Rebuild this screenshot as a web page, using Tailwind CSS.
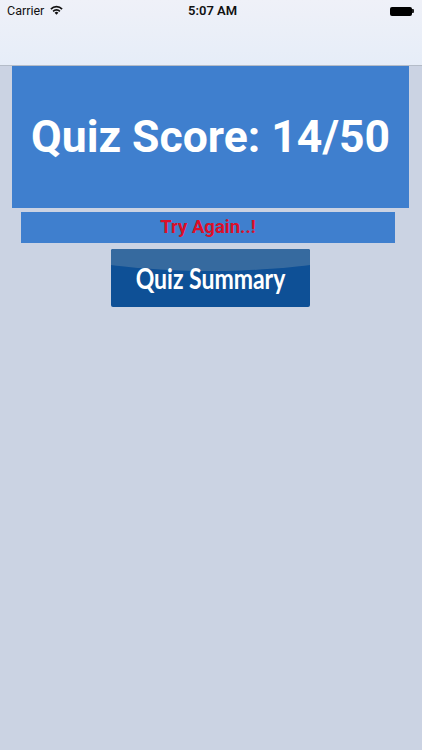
<!DOCTYPE html>
<html>

<head>
    <title>Quiz Score</title>
    <meta charset="UTF-8">
    <meta name="viewport" content="width=device-width, initial-scale=1.0">
    <script src="https://cdn.jsdelivr.net/npm/@tailwindcss/browser@4"></script>
</head>

<body class="bg-[#cbd3e3] font-['Roboto',Arial,sans-serif]">
    <div class="w-[422px] h-[750px] overflow-hidden flex flex-col items-center">
        <!-- status bar + empty nav bar -->
        <div class="w-full h-[66px] shrink-0 bg-gradient-to-b from-[#eff1f8] to-[#e6edf8] border-b border-[#b4bcc8]">
            <div class="relative h-[22px] flex items-center justify-between pl-[7px] pr-[8px] text-[#111]">
                <div class="flex items-center gap-[6px]">
                    <span class="text-[12.5px] leading-none">Carrier</span>
                    <svg class="w-[13px] h-[10px] -mt-[3px]" viewBox="0 0 13 10">
                        <path d="M0.3 3.4A8.6 8.6 0 0 1 12.7 3.4L11.5 4.7A6.9 6.9 0 0 0 1.5 4.7Z" fill="#111" />
                        <path d="M2.5 5.7A5.5 5.5 0 0 1 10.5 5.7L9.3 7A3.8 3.8 0 0 0 3.7 7Z" fill="#111" />
                        <path d="M4.6 7.8A2.6 2.6 0 0 1 8.4 7.8L6.5 9.8Z" fill="#111" />
                    </svg>
                </div>
                <span class="absolute left-[188px] top-[3px] text-[13px] leading-[16px] font-semibold">5:07 AM</span>
                <div class="flex items-center">
                    <div class="w-[22px] h-[9px] rounded-[2px] bg-black"></div>
                    <div class="w-[2px] h-[4px] rounded-r-[1px] bg-[#222]"></div>
                </div>
            </div>
        </div>

        <!-- score -->
        <div class="w-[397px] h-[142px] shrink-0 -ml-[1px] bg-[#3f7fce] flex items-center justify-center">
            <h1 class="text-white text-[44.5px] font-bold leading-none whitespace-nowrap">Quiz Score: 14/50</h1>
        </div>

        <div class="w-[374px] h-[31px] shrink-0 mt-[4px] -ml-[6px] bg-[#3f7fce] flex items-center justify-center">
            <span class="text-[#dc0f28] text-[18.5px] font-bold leading-none">Try Again..!</span>
        </div>

        <!-- summary button -->
        <div class="relative w-[199px] h-[58px] shrink-0 mt-[6px] -ml-[1px] rounded-[2px] bg-[#0e5096] overflow-hidden flex items-center justify-center">
            <div class="absolute -left-[60px] -right-[60px] -top-[34px] h-[56px] rounded-[50%] bg-[#366a9f]"></div>
            <span class="relative text-white text-[23px] font-bold leading-none font-['Lato',sans-serif] scale-y-125 mt-[1px] whitespace-nowrap">Quiz Summary</span>
        </div>
    </div>
</body>

</html>
